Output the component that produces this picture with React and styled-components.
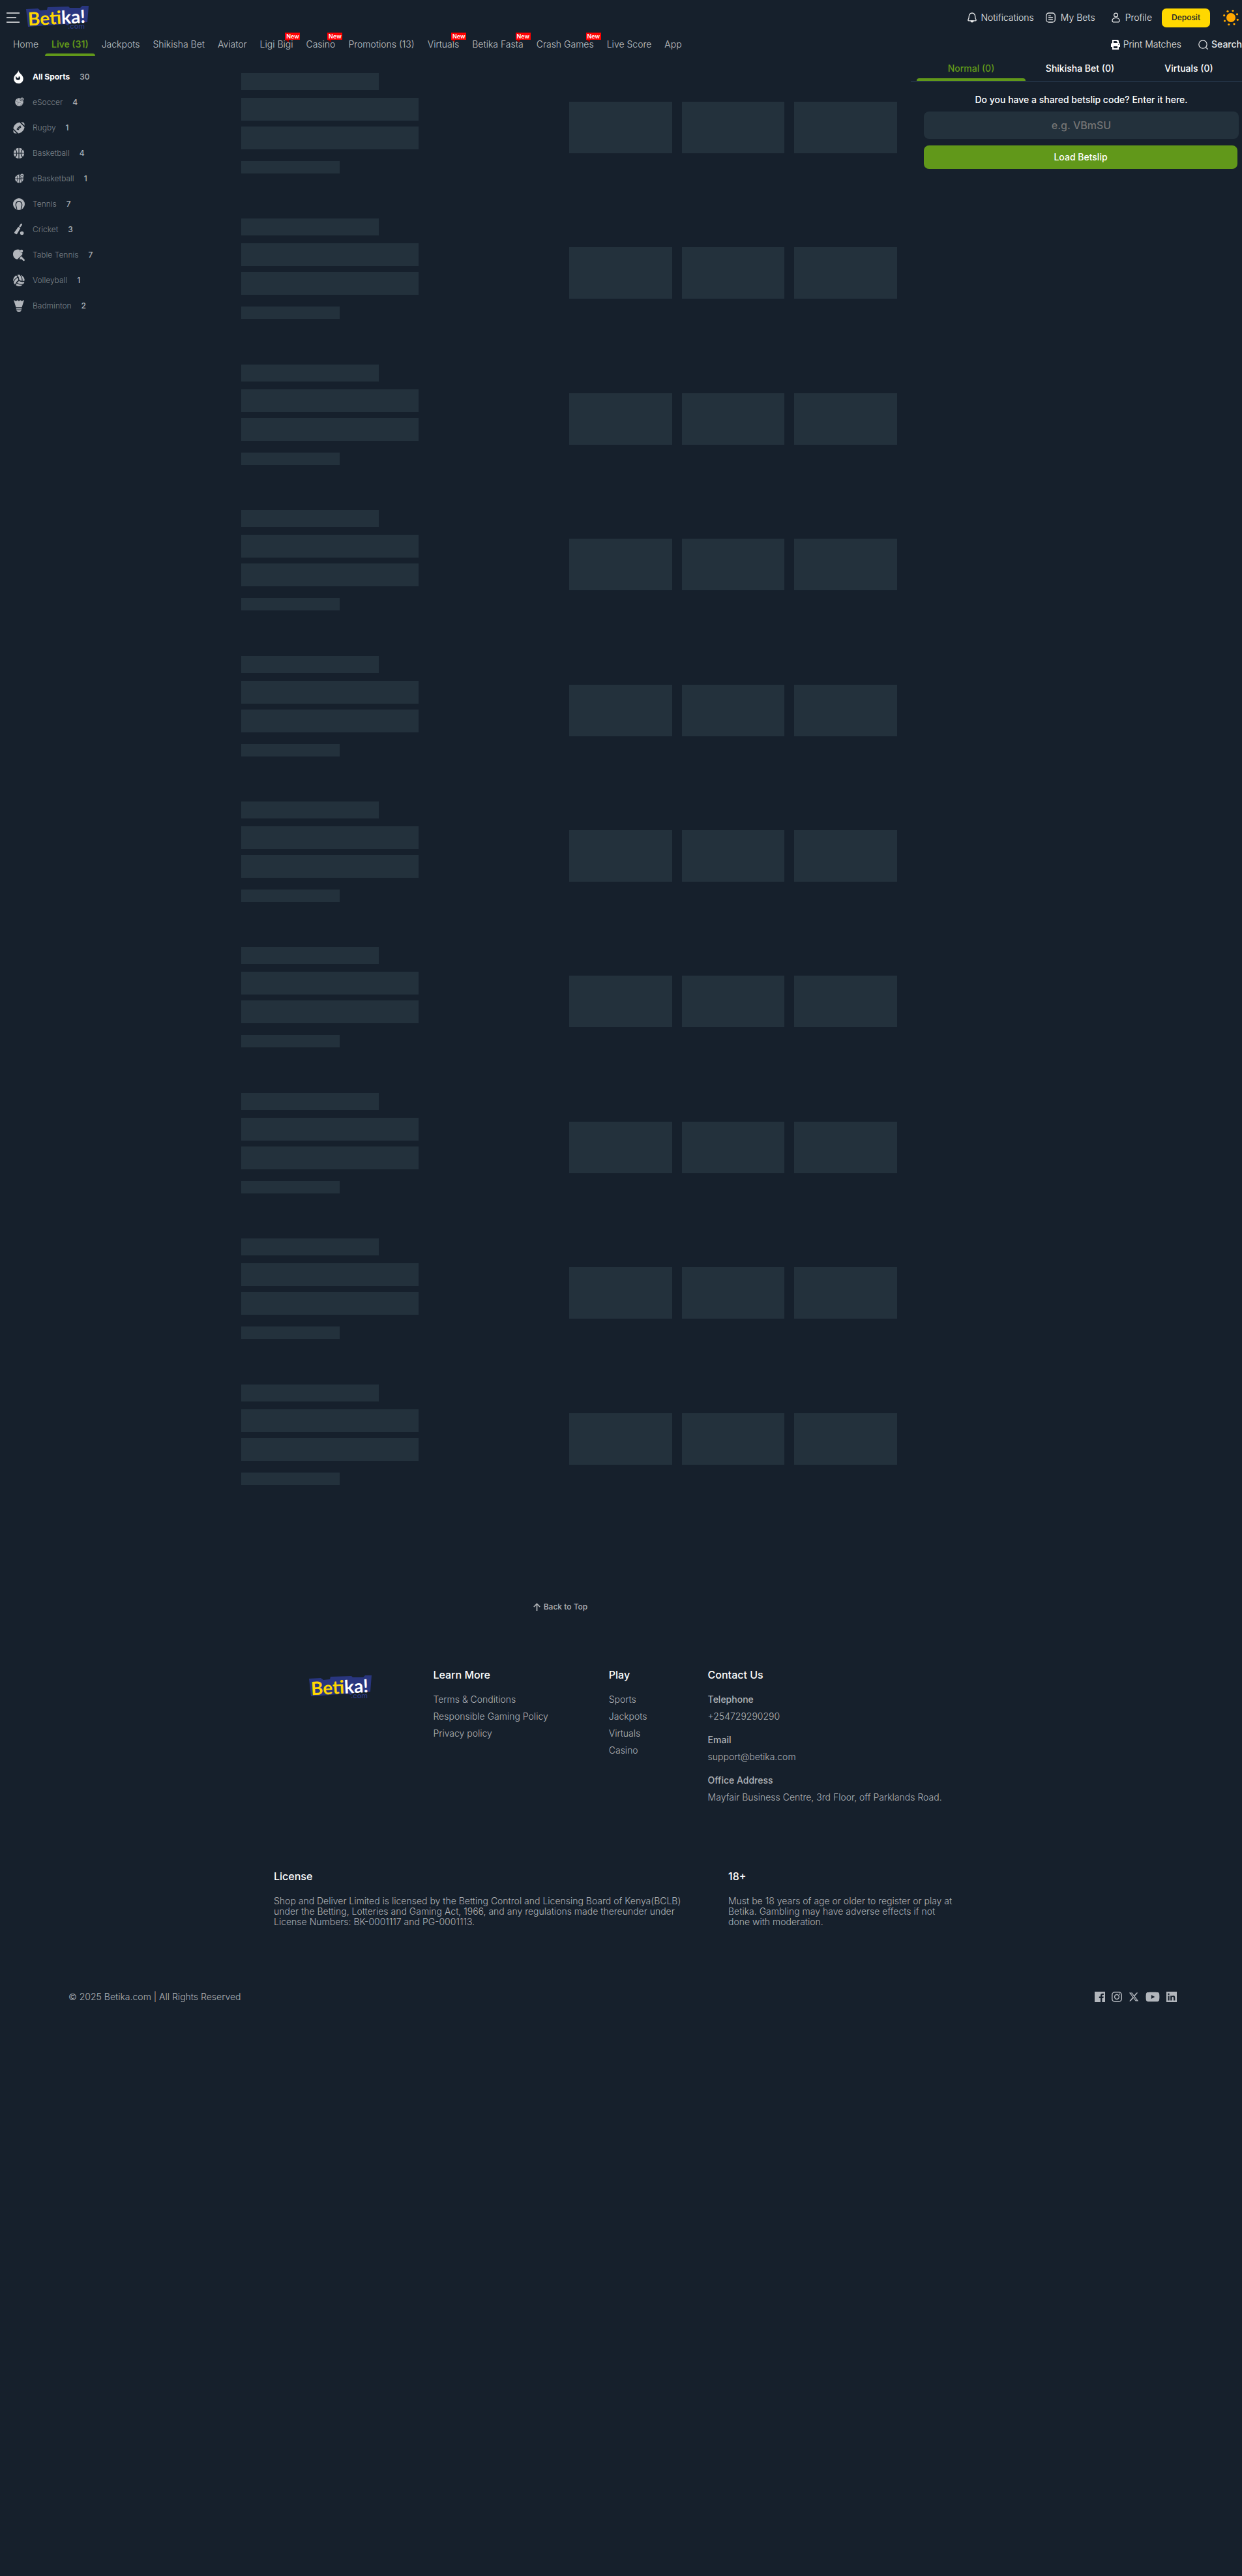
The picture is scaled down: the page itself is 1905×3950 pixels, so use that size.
import React from "react";
import styled, { createGlobalStyle } from "styled-components";
import { FaFootballBall, FaVolleyballBall, FaYoutube } from "react-icons/fa";
import { FaXTwitter } from "react-icons/fa6";

const c = {
  bg: "#16202c",
  block: "#23313c",
  green: "#61981a",
  yellow: "#ffd800",
  text: "#b0b3b7",
  icon: "#b2b6bc",
};

const GlobalStyle = createGlobalStyle`
  *, *::before, *::after { box-sizing: border-box; }
  body {
    margin: 0;
    background: ${c.bg};
    color: ${c.text};
    font-family: Inter, "Liberation Sans", sans-serif;
    font-size: 14px;
    line-height: 16px;
    overflow-x: hidden;
  }
  a { color: inherit; text-decoration: none; }
  button, input { font: inherit; border: 0; padding: 0; }
  button { cursor: pointer; background: none; color: inherit; }
  ul { list-style: none; margin: 0; padding: 0; }
  h2, h3, p { margin: 0; }
  svg { display: block; flex: none; overflow: visible; }
`;

const TopBar = styled.div`
  display: flex;
  align-items: center;
  height: 54px;
  padding: 0 5px 0 10px;
`;
const LogoLink = styled.a`
  margin-left: 10px;
`;
const Account = styled.div`
  display: flex;
  align-items: center;
  margin-left: auto;
  color: #e8e9ea;
`;
const AccountLink = styled.a`
  display: flex;
  align-items: center;
  gap: ${(p) => p.$gap}px;
  margin-right: ${(p) => p.$after}px;
  font-weight: 300;
`;
const Deposit = styled.button`
  width: 74px;
  height: 29px;
  margin-right: 20px;
  border-radius: 7px;
  background: ${c.yellow};
  color: ${c.bg};
  font-size: 12px;
  font-weight: 500;
`;
const NavBar = styled.nav`
  display: flex;
  align-items: flex-start;
  height: 36px;
  padding-left: 10px;
`;
const NavLink = styled.a`
  position: relative;
  height: 32px;
  padding: 6px 10px 0;
  font-weight: ${(p) => (p.$active ? 600 : 300)};
  color: ${(p) => (p.$active ? c.green : "#c0c3c6")};
  white-space: nowrap;
  &::after {
    content: "";
    display: ${(p) => (p.$active ? "block" : "none")};
    position: absolute;
    left: 0;
    right: 0;
    bottom: 0;
    height: 4px;
    border-radius: 4px 4px 0 0;
    background: ${c.green};
  }
`;
const NewBadge = styled.span`
  position: absolute;
  top: -4px;
  right: -1px;
  width: 23px;
  height: 11px;
  background: #f00;
  color: #fff;
  font-size: 9px;
  font-weight: 600;
  line-height: 11px;
  text-align: center;
  &::after {
    content: "";
    position: absolute;
    left: 0;
    top: 11px;
    border-top: 4px solid #900;
    border-left: 6px solid transparent;
  }
`;
const NavTools = styled.div`
  display: flex;
  margin-left: auto;
  padding-top: 6px;
  gap: 26px;
`;
const Tool = styled.button`
  display: flex;
  align-items: center;
  gap: 5px;
  height: 16px;
  color: #e8e9ea;
  line-height: 16px;
  font-weight: ${(p) => (p.$strong ? 500 : 300)};
`;

const Columns = styled.div`
  display: flex;
  align-items: flex-start;
`;
const Sidebar = styled.nav`
  flex: 0 0 360px;
  padding: 8px 0 0 20px;
`;
const Sport = styled.a`
  display: flex;
  align-items: center;
  height: 39px;
  font-size: 12px;
  font-weight: ${(p) => (p.$active ? 700 : 300)};
  color: ${(p) => (p.$active ? "#fff" : "#7d848b")};
  svg {
    margin-right: 12px;
    color: ${(p) => (p.$active ? "#fff" : c.icon)};
  }
`;
const Count = styled.span`
  margin-left: 15px;
  font-weight: 500;
  color: ${c.text};
`;
const Main = styled.main`
  flex: 1;
  padding: 22px 21px 0 10px;
`;
const Match = styled.div`
  display: flex;
  align-items: flex-start;
  padding-bottom: 6.9%;
`;
const Info = styled.div`
  flex: 0 0 50%;
`;
const Bar = styled.div`
  width: ${(p) => p.$w}%;
  height: ${(p) => p.$h}px;
  margin-bottom: ${(p) => p.$after}px;
  background: ${c.block};
`;
const Odds = styled.div`
  flex: 1;
  display: flex;
  gap: 15px;
  padding-top: 44px;
`;
const Odd = styled.div`
  flex: 1;
  height: 79px;
  background: ${c.block};
`;

const Slip = styled.aside`
  flex: 0 0 508px;
  min-width: 0;
`;
const Tabs = styled.div`
  display: flex;
  height: 35px;
  padding-left: 9px;
  border-bottom: 1px solid #2c4157;
`;
const Tab = styled.div`
  flex: 0 0 167px;
  display: flex;
  flex-direction: column;
  &::after {
    content: "";
    height: 4px;
    border-radius: 4px 4px 0 0;
    background: ${(p) => (p.$active ? c.green : "transparent")};
  }
`;
const TabButton = styled.button`
  flex: 1;
  font-weight: 500;
  color: ${(p) => (p.$active ? c.green : "#fff")};
`;
const SlipForm = styled.form`
  display: flex;
  flex-direction: column;
  padding: 20px 5px 0 20px;
`;
const SlipLabel = styled.label`
  height: 26px;
  color: #fff;
  font-weight: 500;
  text-align: center;
`;
const SlipInput = styled.input`
  height: 42px;
  margin-bottom: 10px;
  border-radius: 8px;
  background: ${c.block};
  color: #fff;
  font-size: 16px;
  font-weight: 500;
  text-align: center;
  &::placeholder { color: #757575; opacity: 1; }
`;
const SlipSubmit = styled.button`
  height: 36px;
  margin-right: 2px;
  border-radius: 8px;
  background: ${c.green};
  color: #fff;
  font-weight: 500;
`;

const BackRow = styled.div`
  display: flex;
  justify-content: center;
  padding: 110px 186px 0 0;
`;
const BackToTop = styled.button`
  display: flex;
  align-items: center;
  gap: 5px;
  height: 16px;
  font-size: 12px;
  font-weight: 500;
  line-height: 16px;
`;
const Footer = styled.footer`
  padding-top: 84px;
`;
const FooterColumns = styled.div`
  display: flex;
  justify-content: center;
  gap: 93px;
  padding-left: 14px;
`;
const FooterLogo = styled.a`
  padding-top: 13px;
`;
const FooterTitle = styled.h2`
  margin-bottom: ${(p) => p.$after}px;
  color: #fff;
  font-size: 16px;
  font-weight: 500;
  line-height: 24px;
`;
const FooterList = styled.ul`
  font-weight: 300;
  line-height: 26px;
`;
const ContactTitle = styled.h3`
  font-size: 14px;
  font-weight: 500;
  line-height: 26px;
`;
const ContactText = styled.p`
  font-weight: 300;
  line-height: 26px;
  margin-bottom: 10px;
`;
const Legal = styled.div`
  display: flex;
  justify-content: center;
  gap: 60px;
  padding-top: 86px;
`;
const LegalBlock = styled.section`
  flex: 0 0 ${(p) => p.$w}px;
  padding-right: ${(p) => p.$inset}px;
  font-weight: 300;
`;
const Bottom = styled.div`
  display: flex;
  align-items: center;
  justify-content: space-between;
  padding: 96px 100px 0 105px;
  font-weight: 300;
`;
const Socials = styled.div`
  display: flex;
  align-items: center;
  gap: 10px;
  color: ${c.icon};
`;

const LogoText = styled.text`
  font-family: Lato, Inter, sans-serif;
  font-weight: 700;
  font-size: 28px;
`;
const DotCom = styled.text`
  font-family: Inter, sans-serif;
  font-weight: 500;
  font-size: 11px;
  fill: #293a86;
`;

function Logo() {
  return (
    <svg width="97" height="37" viewBox="0 0 97 37" role="img" aria-label="Betika.com">
      <path d="M0 5 L18 4 L22 7 L32 6 L33 2 L65 1 L67 3 L83 3 L86 0 L96 0 L94 25 L67 27 L64 30 L60 28 L3 32 Z" fill="#29367f" />
      <g transform="rotate(-3 48 20)">
        <LogoText x="3" y="28" fill="#fff">
          <tspan fill={c.yellow}>Bet</tspan>ika!
        </LogoText>
      </g>
      <DotCom x="64" y="35">.com</DotCom>
    </svg>
  );
}

const Svg = ({ children }) => (
  <svg width="18" height="18" viewBox="0 0 18 18" fill="none" aria-hidden="true">
    {children}
  </svg>
);

const Fire = () => (
  <svg width="18" height="20" viewBox="0 0 18 20" fill="none" aria-hidden="true">
    <path fill="currentColor" d="M8.300 0c.2 2.200 1.900 3.800 3.600 5.500 2 2 3.800 4.200 3.800 7.200 0 4.200-3.100 7.300-7.300 7.300s-7.300-3.100-7.300-7.200c0-2.600 1.100-4.700 2.700-6.300C5.400 4.800 7.700 3.200 8.300 0Z" />
    <path fill={c.bg} d="M4.900 8.400c-.9 1.300-1.100 2.600-.7 3.900.6 2 2.300 2.700 4 2.500 1.800-.2 3-1.600 2.800-3.300-.2-1.300-1-2.300-2.300-3.100.3 1.600 0 2.700-1 3-1.300.5-2.500-.9-2.800-3Z" />
  </svg>
);
const Joystick = () => (
  <>
    <circle cx="13.800" cy="4" r="3.300" fill={c.bg} />
    <circle cx="13.800" cy="4" r="2.600" fill="currentColor" />
    <path d="M12.400 4h2.800" stroke={c.bg} strokeWidth="1" />
  </>
);
const ESoccer = () => (
  <Svg>
    <circle cx="9.500" cy="8.500" r="6.300" fill="currentColor" />
    <path d="M5 7l3 2-1 4M8 9l4 0M11 14l2-3 3 0M7 3l0 3" stroke={c.bg} strokeWidth=".6" opacity=".6" />
    <Joystick />
  </Svg>
);
const Basketball = () => (
  <Svg>
    <circle cx="9" cy="9" r="8.200" fill="currentColor" />
    <path d="M9 0v18M0 9h18M3.200 2.800c3.600 3.500 3.600 8.900 0 12.400M14.800 2.800c-3.600 3.500-3.600 8.900 0 12.400" stroke={c.bg} strokeWidth="1.200" />
  </Svg>
);
const EBasketball = () => (
  <Svg>
    <circle cx="9.500" cy="9" r="6.500" fill="currentColor" />
    <path d="M9.500 2.500v13M3 9h13M5.500 4c2 3 2 7 0 10M13.500 4c-2 3-2 7 0 10" stroke={c.bg} strokeWidth=".9" />
    <Joystick />
  </Svg>
);
const Tennis = () => (
  <Svg>
    <circle cx="9" cy="9" r="9" fill="currentColor" />
    <path d="M5.600 16.500c0-3-1.300-3.600-1.300-6.600C4.300 6.800 6.400 5 9 5s4.700 1.800 4.700 4.900c0 3-1.300 3.600-1.300 6.600" stroke={c.bg} strokeWidth="1.300" />
  </Svg>
);
const Cricket = () => (
  <Svg>
    <path d="M12.700 1.200 10.600 4.300" stroke="currentColor" strokeWidth="2.600" strokeLinecap="round" />
    <path d="M8.100 4.800 11.300 7 6.300 15.600c-.4.700-1 .9-1.700.5L2.500 14.700c-.6-.4-.7-1-.3-1.700Z" fill="currentColor" />
    <circle cx="13.600" cy="14.500" r="2.800" fill="currentColor" />
  </Svg>
);
const TableTennis = () => (
  <Svg>
    <path d="M7.300.6c1.500 0 2.600.3 3.600.9-1 2.300.7 4.400 3.200 4.200.5 1.700.4 3.200-.2 4.600L8.600 15.600C4 16.200 0 12.700 0 7.900 0 3.600 3 .6 7.300.6Z" fill="currentColor" />
    <circle cx="13" cy="3" r="2.300" fill="currentColor" />
    <path d="M7 16.200 14.800 8.500" stroke={c.bg} strokeWidth="1.200" />
    <path d="M12.300 12.800 16.500 16.800" stroke="currentColor" strokeWidth="2.800" strokeLinecap="round" />
    <path d="M9.500 15.600 14 11.200 14.400 13.800 12.400 15.400Z" fill="currentColor" />
  </Svg>
);
const Badminton = () => (
  <Svg>
    <path d="M1 0l3.500 1.800L6.800.2 9 1.800 11.200.2 13.500 1.800 17 0l-3.500 11.300h-9ZM4.800 12.500h8.400v1.900H4.800ZM5.200 15.400h7.600C12.600 17.200 11 18 9 18s-3.600-.8-3.800-2.600Z" fill="currentColor" />
  </Svg>
);

const Bell = () => (
  <svg width="14" height="16" viewBox="0 0 14 16" fill="none" stroke="currentColor" strokeWidth="1.300" strokeLinejoin="round" aria-hidden="true">
    <path d="M7 1C4.200 1 2.300 3.200 2.300 6c0 2.400-.4 3.600-1.200 4.900-.6 1.100-.3 1.900.9 1.900h10c1.200 0 1.500-.8.9-1.900-.8-1.300-1.200-2.500-1.200-4.900 0-2.800-1.900-5-4.700-5Z" />
    <path d="M5 13c.2 2.600 3.800 2.600 4 0Z" fill="currentColor" />
  </svg>
);
const Bets = () => (
  <svg width="15" height="16" viewBox="0 0 15 16" fill="none" stroke="currentColor" strokeWidth="1.300" strokeLinecap="round" aria-hidden="true">
    <rect x=".7" y="1" width="13.600" height="14" rx="4" />
    <path d="M4.500 5.200h3M4.500 8h6M4.500 10.800h6" />
  </svg>
);
const Person = () => (
  <svg width="13" height="16" viewBox="0 0 13 16" fill="none" stroke="currentColor" strokeWidth="1.300" aria-hidden="true">
    <circle cx="6.500" cy="4" r="2.900" />
    <path d="M6.500 8.300c-3 0-5.500 1.700-5.500 4.100 0 1.700 1.200 2.500 2.600 2.500h5.800c1.400 0 2.600-.8 2.600-2.500 0-2.400-2.500-4.100-5.500-4.100Z" />
  </svg>
);
const Sun = () => (
  <svg width="24" height="26" viewBox="0 0 24 26" fill="#ffa800" aria-hidden="true">
    <circle cx="12" cy="13" r="7" />
    <circle cx="7" cy="3.300" r="1.600" /><circle cx="15" cy="2.500" r="1.600" />
    <circle cx="21.500" cy="7.800" r="1.600" /><circle cx="22.300" cy="16.300" r="1.600" />
    <circle cx="17" cy="22.800" r="1.600" /><circle cx="8.800" cy="23.500" r="1.600" />
    <circle cx="2.500" cy="18" r="1.600" /><circle cx="1.700" cy="9.700" r="1.600" />
  </svg>
);
const Printer = () => (
  <svg width="14" height="15" viewBox="0 0 14 15" aria-hidden="true">
    <path fill="#fff" fillRule="evenodd" d="M2 0h8.500L12 1.500V5c1.200 0 2 .9 2 2v4h-2v4H2v-4H0V7c0-1.100.8-2 2-2ZM4 2v3h6V3.200H8.800V2ZM4 10v3h6v-3Zm7.300-3.300v1.200h1.200V6.700Z" />
  </svg>
);
const Magnifier = () => (
  <svg width="15" height="15" viewBox="0 0 15 15" fill="none" stroke="currentColor" strokeWidth="1.200" strokeLinecap="round" aria-hidden="true">
    <circle cx="7" cy="7" r="6.200" />
    <path d="M11.600 11.800 14.300 14.300" />
  </svg>
);
const Menu = () => (
  <svg width="20" height="16" viewBox="0 0 20 16" stroke="#b9bcc0" strokeWidth="2" aria-hidden="true">
    <path d="M0 1h20M0 8h15M0 15h20" />
  </svg>
);
const ArrowUp = () => (
  <svg width="11" height="12" viewBox="0 0 11 12" fill="none" stroke="currentColor" strokeWidth="1.700" aria-hidden="true">
    <path d="M5.500 12V1.200M.8 6 5.500 1.200 10.200 6" />
  </svg>
);
const Facebook = () => (
  <svg width="16" height="16" viewBox="0 0 16 16" aria-hidden="true">
    <path fill="currentColor" fillRule="evenodd" d="M0 0h16v16h-4.600V9.900h2l.4-2.400h-2.400V6.100c0-.8.3-1.200 1.200-1.200h1.300V2.800c-.4-.1-1-.1-1.700-.1-2 0-3.200 1.100-3.200 3.200v1.600H6.800v2.400H9V16H0Z" />
  </svg>
);
const Instagram = () => (
  <svg width="16" height="16" viewBox="0 0 16 16" fill="none" stroke="currentColor" strokeWidth="1.500" aria-hidden="true">
    <rect x=".8" y=".8" width="14.400" height="14.400" rx="4.200" />
    <circle cx="8" cy="8" r="3.400" />
    <circle cx="12.200" cy="3.800" r="1" fill="currentColor" stroke="none" />
  </svg>
);
const LinkedIn = () => (
  <svg width="16" height="16" viewBox="0 0 16 16" aria-hidden="true">
    <path fill="currentColor" fillRule="evenodd" d="M0 0h16v16H0ZM2.400 6.200v7.400h2.300V6.200ZM3.500 2.400a1.350 1.350 0 1 0 0 2.700 1.350 1.350 0 0 0 0-2.700ZM6.200 6.200v7.400h2.300v-3.800c0-1 .4-1.700 1.300-1.700s1.200.7 1.200 1.700v3.800h2.400V9.400c0-2.200-1-3.400-2.700-3.400-1.100 0-1.800.5-2.200 1.200v-1Z" />
  </svg>
);

const nav = [
  ["Home"], ["Live (31)", false, true], ["Jackpots"], ["Shikisha Bet"], ["Aviator"],
  ["Ligi Bigi", true], ["Casino", true], ["Promotions (13)"], ["Virtuals", true],
  ["Betika Fasta", true], ["Crash Games", true], ["Live Score"], ["App"],
];
const sports = [
  ["All Sports", 30, <Fire />],
  ["eSoccer", 4, <ESoccer />],
  ["Rugby", 1, <FaFootballBall size={18} />],
  ["Basketball", 4, <Basketball />],
  ["eBasketball", 1, <EBasketball />],
  ["Tennis", 7, <Tennis />],
  ["Cricket", 3, <Cricket />],
  ["Table Tennis", 7, <TableTennis />],
  ["Volleyball", 1, <FaVolleyballBall size={18} />],
  ["Badminton", 2, <Badminton />],
];
const learn = ["Terms & Conditions", "Responsible Gaming Policy", "Privacy policy"];
const play = ["Sports", "Jackpots", "Virtuals", "Casino"];
const tabs = ["Normal (0)", "Shikisha Bet (0)", "Virtuals (0)"];

function FooterLinks({ title, items }) {
  return (
    <div>
      <FooterTitle $after={13}>{title}</FooterTitle>
      <FooterList>
        {items.map((t) => <li key={t}><a href="#">{t}</a></li>)}
      </FooterList>
    </div>
  );
}

export default function App() {
  return (
    <>
      <GlobalStyle />
      <header>
        <TopBar>
          <button type="button" aria-label="Menu"><Menu /></button>
          <LogoLink href="#"><Logo /></LogoLink>
          <Account>
            <AccountLink href="#" $after={18} $gap={6}><Bell />Notifications</AccountLink>
            <AccountLink href="#" $after={25} $gap={8}><Bets />My Bets</AccountLink>
            <AccountLink href="#" $after={15} $gap={8}><Person />Profile</AccountLink>
            <Deposit type="button">Deposit</Deposit>
            <button type="button" aria-label="Light mode"><Sun /></button>
          </Account>
        </TopBar>
        <NavBar>
          {nav.map(([label, isNew, active]) => (
            <NavLink href="#" key={label} $active={active}>
              {label}
              {isNew && <NewBadge>New</NewBadge>}
            </NavLink>
          ))}
          <NavTools>
            <Tool type="button"><Printer />Print Matches</Tool>
            <Tool type="button" $strong><Magnifier />Search</Tool>
          </NavTools>
        </NavBar>
      </header>
      <Columns>
        <Sidebar>
          {sports.map(([name, count, icon], i) => (
            <Sport href="#" key={name} $active={i === 0}>
              {icon}{name}<Count>{count}</Count>
            </Sport>
          ))}
        </Sidebar>
        <Main>
          {Array.from({ length: 10 }, (_, i) => (
            <Match key={i}>
              <Info>
                <Bar $w={42} $h={26} $after={12} />
                <Bar $w={54} $h={35} $after={9} />
                <Bar $w={54} $h={35} $after={18} />
                <Bar $w={30} $h={19} $after={0} />
              </Info>
              <Odds><Odd /><Odd /><Odd /></Odds>
            </Match>
          ))}
        </Main>
        <Slip>
          <Tabs>
            {tabs.map((t, i) => (
              <Tab key={t} $active={i === 0}>
                <TabButton type="button" $active={i === 0}>{t}</TabButton>
              </Tab>
            ))}
          </Tabs>
          <SlipForm onSubmit={(e) => e.preventDefault()}>
            <SlipLabel htmlFor="code">Do you have a shared betslip code? Enter it here.</SlipLabel>
            <SlipInput id="code" placeholder="e.g. VBmSU" />
            <SlipSubmit type="submit">Load Betslip</SlipSubmit>
          </SlipForm>
        </Slip>
      </Columns>
      <BackRow>
        <BackToTop type="button"><ArrowUp />Back to Top</BackToTop>
      </BackRow>
      <Footer>
        <FooterColumns>
          <FooterLogo href="#"><Logo /></FooterLogo>
          <FooterLinks title="Learn More" items={learn} />
          <FooterLinks title="Play" items={play} />
          <div>
            <FooterTitle $after={13}>Contact Us</FooterTitle>
            <ContactTitle>Telephone</ContactTitle>
            <ContactText>+254729290290</ContactText>
            <ContactTitle>Email</ContactTitle>
            <ContactText>support@betika.com</ContactText>
            <ContactTitle>Office Address</ContactTitle>
            <ContactText>Mayfair Business Centre, 3rd Floor, off Parklands Road.</ContactText>
          </div>
        </FooterColumns>
        <Legal>
          <LegalBlock $w={637} $inset={0}>
            <FooterTitle $after={18}>License</FooterTitle>
            <p>Shop and Deliver Limited is licensed by the Betting Control and Licensing Board of Kenya(BCLB) under the Betting, Lotteries and Gaming Act, 1966, and any regulations made thereunder under License Numbers: BK-0001117 and PG-0001113.</p>
          </LegalBlock>
          <LegalBlock $w={368} $inset={18}>
            <FooterTitle $after={18}>18+</FooterTitle>
            <p>Must be 18 years of age or older to register or play at Betika. Gambling may have adverse effects if not done with moderation.</p>
          </LegalBlock>
        </Legal>
        <Bottom>
          <span>© 2025 Betika.com | All Rights Reserved</span>
          <Socials>
            <a href="#" aria-label="Facebook"><Facebook /></a>
            <a href="#" aria-label="Instagram"><Instagram /></a>
            <a href="#" aria-label="X"><FaXTwitter size={16} /></a>
            <a href="#" aria-label="YouTube"><FaYoutube size={22} /></a>
            <a href="#" aria-label="LinkedIn"><LinkedIn /></a>
          </Socials>
        </Bottom>
      </Footer>
    </>
  );
}
